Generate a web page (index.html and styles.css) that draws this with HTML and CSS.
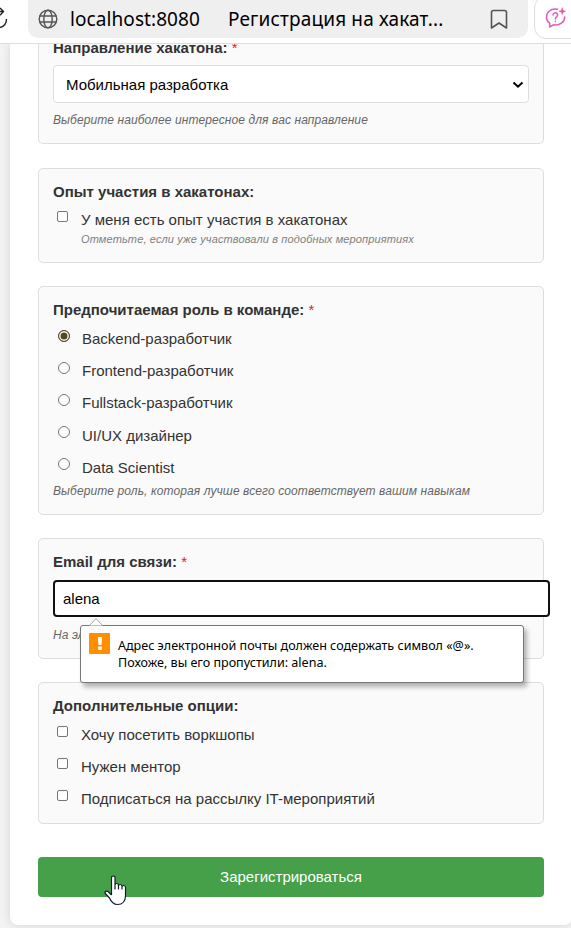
FILE: index.html
```html
<!DOCTYPE html>
<html lang="ru">
<head>
<meta charset="utf-8">
<title>Регистрация на хакатон</title>
<link rel="stylesheet" href="styles.css">
</head>
<body>
<header class="browser">
  <svg class="reload" width="9" height="36" viewBox="0 0 9 36" fill="none" stroke="#222" stroke-width="1.4"><path d="M0 11.5H3M0 8l3.500 3.500L0 15.200M6.500 19c0 4-2.500 7.500-6.500 8.500"/></svg>
  <div class="address">
    <svg class="globe" width="20" height="20" viewBox="0 0 20 20" fill="none" stroke="#555" stroke-width="1.4"><circle cx="10" cy="10" r="8.800"/><ellipse cx="10" cy="10" rx="4.200" ry="8.800"/><path d="M1.500 7h17M1.500 13h17"/></svg>
    <span class="host">localhost:8080</span>
    <span class="tab-title">Регистрация на хакат...</span>
    <svg class="bookmark" width="18" height="21" viewBox="0 0 18 21" fill="none" stroke="#555" stroke-width="1.600" stroke-linejoin="round"><path d="M1.500 19V3.500Q1.500 1.500 3.500 1.500H14.500Q16.500 1.500 16.500 3.500V19L9 14Z"/></svg>
  </div>
  <div class="assistant">
    <svg width="22" height="22" viewBox="0 0 22 22" fill="none" stroke="#e05cc0" stroke-width="1.500" stroke-linecap="round" stroke-linejoin="round"><path d="M12.500 2.200C6 .8 1.500 5 1.500 10.200c0 2.500 1.200 4.600 3.200 6V20l4-2.300c6 1 11-2.500 11-7.700"/><path d="M8 8c.2-3.200 5-2.800 4.600.2-.2 1.600-2.200 1.700-2.200 3.800M10.400 14.300v.2"/><path d="M17.200 1l.9 2.400 2.400.9-2.400.9-.9 2.400-.9-2.400-2.400-.9 2.400-.9z" fill="#e8559c" stroke="#e8559c" stroke-width=".5"/></svg>
  </div>
</header>
<main class="page">
  <form class="card">
    <section class="group direction">
      <div class="legend">Направление хакатона: <span class="req">*</span></div>
      <div class="select"><span>Мобильная разработка</span><svg width="12" height="8" viewBox="0 0 12 8" fill="none" stroke="#000" stroke-width="2"><path d="M1.500 1.500L6 5.700l4.500-4.200"/></svg></div>
      <div class="hint">Выберите наиболее интересное для вас направление</div>
    </section>
    <section class="group experience">
      <div class="legend">Опыт участия в хакатонах:</div>
      <div class="option"><i class="box"></i><span>У меня есть опыт участия в хакатонах</span></div>
      <div class="hint small">Отметьте, если уже участвовали в подобных мероприятиях</div>
    </section>
    <section class="group role">
      <div class="legend">Предпочитаемая роль в команде: <span class="req">*</span></div>
      <div class="option radio"><i class="dot on"></i><span>Backend-разработчик</span></div>
      <div class="option radio"><i class="dot"></i><span>Frontend-разработчик</span></div>
      <div class="option radio"><i class="dot"></i><span>Fullstack-разработчик</span></div>
      <div class="option radio"><i class="dot"></i><span>UI/UX дизайнер</span></div>
      <div class="option radio"><i class="dot"></i><span>Data Scientist</span></div>
      <div class="hint">Выберите роль, которая лучше всего соответствует вашим навыкам</div>
    </section>
    <section class="group email">
      <div class="legend">Email для связи: <span class="req">*</span></div>
      <div class="input">alena</div>
      <div class="hint">На эл</div>
      <div class="tooltip">
        <svg class="arrow" width="16" height="9" viewBox="0 0 16 9"><path d="M1.500 8.500L8 1.500l6.500 7" fill="#fff" stroke="#aaa"/></svg>
        <svg class="warn" width="21" height="21" viewBox="0 0 21 21"><rect width="21" height="21" rx="1" fill="#ff8f00"/><path d="M9 4h4l-.4 8H9.400zM9.200 13.500h3.600V17H9.200z" fill="#fff"/></svg>
        <div>Адрес электронной почты должен содержать символ «@».<br>Похоже, вы его пропустили: alena.</div>
      </div>
    </section>
    <section class="group extras">
      <div class="legend">Дополнительные опции:</div>
      <div class="option"><i class="box"></i><span>Хочу посетить воркшопы</span></div>
      <div class="option"><i class="box"></i><span>Нужен ментор</span></div>
      <div class="option"><i class="box"></i><span>Подписаться на рассылку IT-мероприятий</span></div>
    </section>
    <div class="submit">Зарегистрироваться
      <svg class="cursor" width="24" height="31" viewBox="0 0 24 31"><path d="M7.500 20V3q0-2 1.800-2T11 3v7q0-1.500 1.700-1.500T14.500 10.500q0-1 1.700-1T18 11.500q0-1 1.700-1t1.800 2V21c0 5-3 8.500-8 8.500-4.500 0-6.500-3-8-6.500L1.300 18.500C.5 16.500 2.500 15.500 4 16.500L7.500 20M11 9v5.500M14.500 10.500v4M18 11.500v3" fill="#fff" stroke="#161a2b" stroke-width="1.200" stroke-linejoin="round"/></svg>
    </div>
  </form>
</main>
</body>
</html>
```
FILE: styles.css
```css
* { box-sizing: border-box; }
body { margin: 0; width: 571px; height: 928px; overflow: hidden; display: flex; flex-direction: column; background: #f3f3f3; font-family: "Liberation Sans", Arial, sans-serif; font-size: 15px; color: #333; }
.browser { height: 44px; flex: none; display: flex; align-items: flex-start; background: #fff; border-bottom: 1px solid #ddd; overflow: hidden; }
.reload { flex: none; margin-right: 19px; }
.address { flex: none; width: 500px; height: 38px; display: flex; align-items: center; background: #efefef; border-radius: 0 0 10px 10px; padding-left: 10px; font-family: "Noto Sans", sans-serif; font-size: 19px; color: #000; white-space: nowrap; }
.globe { margin-right: 12px; flex: none; }
.host { width: 158px; letter-spacing: .08px; }
.tab-title { width: 262px; letter-spacing: .15px; }
.bookmark { flex: none; }
.assistant { flex: none; width: 60px; height: 43px; margin: -4px 0 0 6px; border: 1px solid #ddd; border-radius: 12px; padding: 10px 0 0 10px; }
.page { flex: 1; min-height: 0; padding-left: 10px; overflow: hidden; }
.card { width: 562px; height: 881px; background: #fff; border-radius: 0 0 8px 8px; padding: 0 28px; box-shadow: 0 0 10px rgba(0,0,0,.13); }
.group { position: relative; display: flow-root; border: 1px solid #ddd; border-radius: 5px; background: #fafafa; padding: 14px 14px 0; margin-bottom: 23px; }
.legend { font-weight: bold; line-height: 18px; white-space: nowrap; }
.req { color: #e01b24; font-weight: normal; }
.hint { font-size: 12px; line-height: 16px; font-style: italic; color: #666; white-space: nowrap; letter-spacing: .1px; }
.direction { height: 100px; border-top: 0; border-radius: 0 0 5px 5px; padding-top: 0; margin-bottom: 24px; }
.direction .legend { margin-top: -5px; }
.select { height: 38px; margin: 8px 0 9px; border: 1px solid #ddd; border-radius: 4px; background: #fff; color: #000; display: flex; align-items: center; justify-content: space-between; padding: 1px 4px 0 12px; }
.experience { height: 95px; }
.role { height: 229px; }
.email { height: 121px; }
.extras { height: 142px; margin-bottom: 33px; }
.option { display: flex; align-items: flex-start; height: 32.2px; padding: 3px 0 0 4px; line-height: 18px; white-space: nowrap; }
.option span { padding-top: 7px; }
.extras .legend, .role .legend { margin-bottom: 1px; }
.box { width: 11px; height: 11px; margin: 7px 13px 0 0; border: 1px solid #767676; border-radius: 2px; background: #fff; }
.dot { width: 12px; height: 12px; margin: 6.5px 12px 0 1px; border: 1px solid #767676; border-radius: 50%; background: #fff; }
.dot.on { border-color: #514821; background: #514821; box-shadow: inset 0 0 0 1.5px #fff; }
.hint.small { font-size: 11px; color: #808080; padding-left: 28px; margin-top: -2px; letter-spacing: .13px; }
.role .hint { margin-top: 2px; }
.input { width: 497px; height: 37px; margin: 9px 0 10px; border: 2px solid #101010; border-radius: 4px; background: #fff; color: #000; padding-left: 8px; line-height: 33px; }
.tooltip { position: absolute; z-index: 2; left: 41px; top: 86px; width: 444px; height: 58px; display: flex; background: #fff; border: 1px solid #777; border-radius: 3px; box-shadow: 3px 4px 5px rgba(0,0,0,.3); padding: 7px 0 0 8px; font-family: "Noto Sans", sans-serif; font-size: 12.55px; line-height: 17px; color: #000; white-space: nowrap; }
.tooltip div { margin: 4px 0 0 8px; }
.arrow { position: absolute; left: 7px; top: -9px; }
.submit { position: relative; height: 40px; border-radius: 4px; background: #45a049; color: #fff; text-align: center; line-height: 40px; }
.cursor { position: absolute; left: 66px; top: 18px; }
```
